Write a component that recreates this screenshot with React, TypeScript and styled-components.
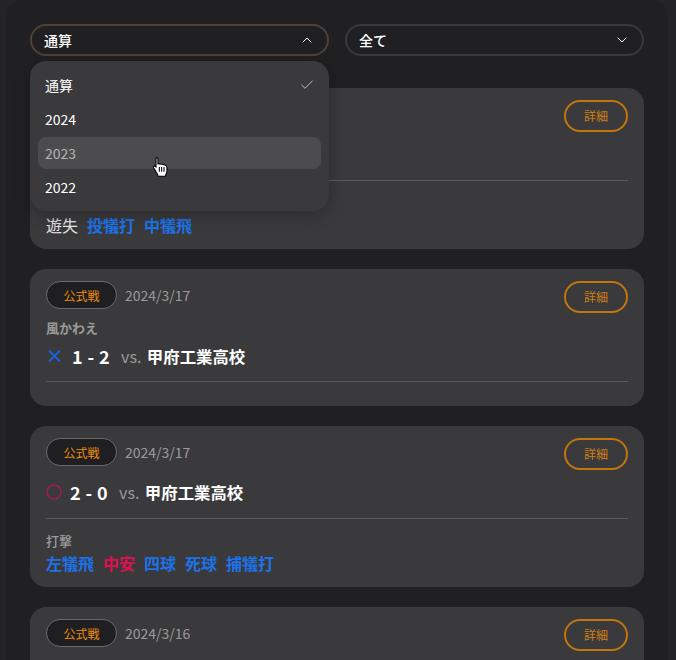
import React from "react";
import styled, { createGlobalStyle } from "styled-components";
import { Check, ChevronDown, ChevronUp } from "lucide-react";

const GlobalStyle = createGlobalStyle`
  html, body {
    margin: 0;
    padding: 0;
    height: 660px;
    overflow: hidden;
    background: #242426;
  }
  * {
    box-sizing: border-box;
  }
  body {
    font-family: "Noto Sans CJK JP", "Noto Sans", sans-serif;
    color: #fff;
  }
`;

const Page = styled.div`
  height: 660px;
  margin: 0 8px 0 6px;
  padding: 24px 24px 0;
  background: #202022;
  border-radius: 16px 16px 0 0;
  overflow: hidden;
`;

const FilterRow = styled.div`
  display: grid;
  grid-template-columns: 1fr 1fr;
  gap: 16px;
  margin-bottom: 32px;
`;

const SelectWrap = styled.div`
  position: relative;
`;

const SelectButton = styled.div<{ $open?: boolean }>`
  height: 32px;
  display: flex;
  align-items: center;
  justify-content: space-between;
  padding: 0 12px;
  border: 2px solid ${(p) => (p.$open ? "#4d4238" : "#38383e")};
  border-radius: 16px;
  background: #202022;
  font-size: 14px;
  font-weight: 500;
  color: #fff;
`;

const Menu = styled.div`
  position: absolute;
  z-index: 10;
  top: 37px;
  left: 0;
  right: 0;
  display: flex;
  flex-direction: column;
  gap: 2px;
  padding: 8px;
  border-radius: 16px;
  background: #3a3a3c;
  box-shadow: 0 4px 16px rgba(0, 0, 0, 0.25);
`;

const MenuItem = styled.div<{ $hover?: boolean }>`
  height: 32px;
  display: flex;
  align-items: center;
  justify-content: space-between;
  padding: 0 6px 0 7px;
  border-radius: 8px;
  font-size: 14px;
  font-weight: 400;
  color: ${(p) => (p.$hover ? "#b4b4b4" : "#fff")};
  background: ${(p) => (p.$hover ? "#4c4c4e" : "transparent")};
`;

const Cursor = styled.svg`
  position: absolute;
  z-index: 11;
  left: 122px;
  top: 132px;
`;

const CardList = styled.div`
  display: flex;
  flex-direction: column;
  gap: 20px;
`;

const Card = styled.div`
  padding: 12px 16px 12px;
  border-radius: 16px;
  background: #3a3a3c;
`;

const CardHeader = styled.div`
  display: flex;
  align-items: flex-start;
  justify-content: space-between;
`;

const Meta = styled.div`
  display: flex;
  align-items: center;
  gap: 8px;
`;

const Badge = styled.span`
  width: 71px;
  height: 28px;
  display: flex;
  align-items: center;
  justify-content: center;
  border: 1px solid #6a6a6c;
  border-radius: 14px;
  background: #1f1f21;
  color: #ee8c0c;
  font-size: 12px;
`;

const DateText = styled.span`
  color: #9a9a9a;
  font-size: 14px;
`;

const DetailButton = styled.div`
  width: 64px;
  height: 32px;
  display: flex;
  align-items: center;
  justify-content: center;
  padding-bottom: 2px;
  border: 2px solid #c4750c;
  border-radius: 16px;
  color: #d37f10;
  font-size: 12px;
`;

const GameName = styled.div`
  height: 18px;
  margin-top: 6px;
  color: #9a9a9a;
  font-size: 13px;
  font-weight: 700;
  line-height: 18px;
`;

const ScoreRow = styled.div<{ $named?: boolean }>`
  height: 28px;
  margin-top: ${(p) => (p.$named ? "5px" : "8px")};
  display: flex;
  align-items: center;
`;

const ResultIcon = styled.svg<{ $gap: number }>`
  flex: none;
  margin-right: ${(p) => p.$gap}px;
`;

const Score = styled.span`
  font-size: 18px;
  font-weight: 700;
  letter-spacing: 0.4px;
`;

const Versus = styled.span`
  margin-left: 11px;
  color: #9a9a9a;
  font-size: 16px;
`;

const School = styled.span`
  margin-left: 5.5px;
  font-size: 16.4px;
  font-weight: 700;
`;

const Divider = styled.div<{ $named?: boolean }>`
  height: 1px;
  margin-top: ${(p) => (p.$named ? "11px" : "12px")};
  background: #5a5a5c;
`;

const Batting = styled.div`
  padding-top: 12px;
`;

const BattingLabel = styled.div`
  height: 18px;
  margin-top: 1px;
  color: #9a9a9a;
  font-size: 13px;
  font-weight: 500;
  line-height: 18px;
`;

const Hits = styled.div`
  height: 24px;
  margin-top: 1px;
  display: flex;
  align-items: center;
  gap: 9px;
`;

const Hit = styled.span<{ $kind?: "out" | "hit" | "error" }>`
  font-size: 16px;
  font-weight: ${(p) => (p.$kind === "error" ? 400 : 700)};
  line-height: 24px;
  color: ${(p) =>
    p.$kind === "hit" ? "#e0104f" : p.$kind === "error" ? "#e4e4e4" : "#1d72e8"};
`;

const options = ["通算", "2024", "2023", "2022"];

type Game = {
  date: string;
  name?: string;
  win: boolean;
  score: string;
  school: string;
  hits?: { text: string; kind: "out" | "hit" | "error" }[];
};

const games: Game[] = [
  {
    date: "2024/3/18",
    win: true,
    score: "3 - 1",
    school: "甲府工業高校",
    hits: [
      { text: "遊失", kind: "error" },
      { text: "投犠打", kind: "out" },
      { text: "中犠飛", kind: "out" },
    ],
  },
  { date: "2024/3/17", name: "風かわえ", win: false, score: "1 - 2", school: "甲府工業高校" },
  {
    date: "2024/3/17",
    win: true,
    score: "2 - 0",
    school: "甲府工業高校",
    hits: [
      { text: "左犠飛", kind: "out" },
      { text: "中安", kind: "hit" },
      { text: "四球", kind: "out" },
      { text: "死球", kind: "out" },
      { text: "捕犠打", kind: "out" },
    ],
  },
  { date: "2024/3/16", win: true, score: "4 - 2", school: "甲府工業高校" },
];

const HandCursor = () => (
  <Cursor width="17" height="21" viewBox="0 0 14 18">
    <path
      d="M3.5 1.2c.8 0 1.3.5 1.3 1.3v4.3l.9-.2 1.2.2 1.2.2 1.2.3 1.3.4c1.2.4 1.9 1 1.9 2.3v3c0 1.1-.4 2-1 2.9l-.3 1.5H5l-.5-1.6L1.7 11c-.7-.8-1-1.3-.7-1.9.4-.6 1.2-.5 1.8 0l.4.4V2.5c0-.8 0-1.3.8-1.3z"
      fill="#fff"
      stroke="#000"
      strokeWidth="0.9"
      strokeLinejoin="round"
    />
    <path d="M6 9.5v4M8 9.5v4M10 9.5v4" stroke="#000" strokeWidth="0.9" />
  </Cursor>
);

const LoseMark = () => (
  <ResultIcon width="16" height="16" viewBox="0 0 16 16" fill="none" $gap={10}>
    <path d="M3 2.5l11 11M14 2.5l-11 11" stroke="#1763d6" strokeWidth="2" />
  </ResultIcon>
);

const WinMark = () => (
  <ResultIcon width="16" height="16" viewBox="0 0 16 16" fill="none" $gap={8}>
    <circle cx="8" cy="8" r="7" stroke="#a51c4b" strokeWidth="1.8" strokeDasharray="2.6 0.7" />
  </ResultIcon>
);

export default function App() {
  return (
    <>
      <GlobalStyle />
      <Page>
        <FilterRow>
          <SelectWrap>
            <SelectButton $open>
              通算
              <ChevronUp size={16} strokeWidth={1.5} />
            </SelectButton>
            <Menu>
              {options.map((o, i) => (
                <MenuItem key={o} $hover={o === "2023"}>
                  {o}
                  {i === 0 && <Check size={16} strokeWidth={1} />}
                </MenuItem>
              ))}
            </Menu>
            <HandCursor />
          </SelectWrap>
          <SelectWrap>
            <SelectButton>
              全て
              <ChevronDown size={16} strokeWidth={1.5} />
            </SelectButton>
          </SelectWrap>
        </FilterRow>
        <CardList>
          {games.map((g, i) => (
            <Card key={i}>
              <CardHeader>
                <Meta>
                  <Badge>公式戦</Badge>
                  <DateText>{g.date}</DateText>
                </Meta>
                <DetailButton>詳細</DetailButton>
              </CardHeader>
              {g.name && <GameName>{g.name}</GameName>}
              <ScoreRow $named={!!g.name}>
                {g.win ? <WinMark /> : <LoseMark />}
                <Score>{g.score}</Score>
                <Versus>vs.</Versus>
                <School>{g.school}</School>
              </ScoreRow>
              <Divider $named={!!g.name} />
              <Batting>
                {g.hits && (
                  <>
                    <BattingLabel>打撃</BattingLabel>
                    <Hits>
                      {g.hits.map((h) => (
                        <Hit key={h.text} $kind={h.kind}>
                          {h.text}
                        </Hit>
                      ))}
                    </Hits>
                  </>
                )}
              </Batting>
            </Card>
          ))}
        </CardList>
      </Page>
    </>
  );
}
